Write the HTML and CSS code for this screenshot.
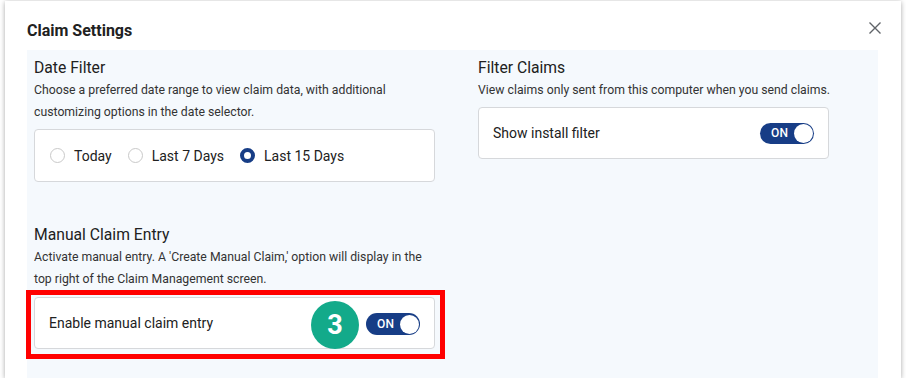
FILE: index.html
```html
<!DOCTYPE html>
<html lang="en">
<head>
  <meta charset="UTF-8" />
  <title>Claim Settings</title>
  <link rel="stylesheet" href="styles.css">
</head>
<body>
  <div class="modal">
    <div class="modal-header">
      <h1 class="modal-title">Claim Settings</h1>
      <button type="button" class="close-btn" aria-label="Close">
        <svg width="12" height="12" viewBox="0 0 12 12">
          <path d="M0.5 0.5 L11.5 11.5 M11.5 0.5 L0.5 11.5" stroke="#5f6368" stroke-width="1.4" fill="none" />
        </svg>
      </button>
    </div>

    <div class="settings-panel">
      <div class="settings-col">
        <div class="section">
          <h2 class="section-title">Date Filter</h2>
          <p class="section-desc">Choose a preferred date range to view claim data, with additional customizing options in the date selector.</p>
          <div class="option-box radio-row">
            <label class="radio"><span class="radio-dot"></span>Today</label>
            <label class="radio"><span class="radio-dot"></span>Last 7 Days</label>
            <label class="radio"><span class="radio-dot checked"></span>Last 15 Days</label>
          </div>
        </div>

        <div class="section section-manual">
          <h2 class="section-title">Manual Claim Entry</h2>
          <p class="section-desc">Activate manual entry. A 'Create Manual Claim,' option will display in the top right of the Claim Management screen.</p>
          <div class="option-box toggle-row highlight">
            <span class="toggle-label">Enable manual claim entry</span>
            <span class="toggle"><span class="toggle-text">ON</span><span class="toggle-knob"></span></span>
            <span class="step-badge">3</span>
            <span class="highlight-frame"></span>
          </div>
        </div>
      </div>

      <div class="settings-col">
        <div class="section">
          <h2 class="section-title">Filter Claims</h2>
          <p class="section-desc">View claims only sent from this computer when you send claims.</p>
          <div class="option-box toggle-row install-box">
            <span class="toggle-label">Show install filter</span>
            <span class="toggle"><span class="toggle-text">ON</span><span class="toggle-knob"></span></span>
          </div>
        </div>
      </div>
    </div>
  </div>
</body>
</html>
```

FILE: styles.css
```css
body {
  font-family: Roboto, 'Liberation Sans', sans-serif;
  background: #ffffff;
  margin: 0;
  padding: 1px 0 0 5px;
  color: #212121;
}

.modal {
  width: 896px;
  height: 377px;
  background: white;
  box-shadow: 0 1px 5px rgba(0,0,0,0.35);
  padding: 0 23px 0 22px;
  box-sizing: border-box;
  display: flex;
  flex-direction: column;
}

.modal-header {
  height: 49px;
  padding-top: 20px;
  box-sizing: border-box;
  display: flex;
  justify-content: space-between;
  align-items: flex-start;
}

.modal-title {
  margin: 0;
  font-size: 16px;
  line-height: 20px;
  font-weight: 700;
  color: #212121;
}

.close-btn {
  background: none;
  border: none;
  padding: 0;
  margin: 1px -3px 0 0;
  width: 12px;
  height: 12px;
  cursor: pointer;
  display: flex;
}

.settings-panel {
  flex: 1;
  background: #f5f9fd;
  padding: 7px;
  display: grid;
  grid-template-columns: 401px 1fr;
  column-gap: 43px;
  align-items: start;
}

.settings-col {
  display: flex;
  flex-direction: column;
}

.section-manual {
  margin-top: 42px;
}

.section-manual .section-desc {
  margin-bottom: 7px;
}

.section-title {
  margin: 0;
  font-size: 15.7px;
  line-height: 22px;
  font-weight: 400;
  color: #212121;
}

.section-desc {
  margin: 0 0 6px;
  font-size: 12.25px;
  line-height: 22px;
  color: #333333;
}

.option-box {
  background: white;
  border: 1px solid #d6d8db;
  border-radius: 4px;
  box-sizing: border-box;
  height: 53px;
  display: flex;
  align-items: center;
  position: relative;
}

.install-box {
  width: 351px;
}

.radio-row {
  padding: 0 15px;
  gap: 16px;
}

.radio {
  display: flex;
  align-items: center;
  gap: 9px;
  font-size: 14px;
  color: #212121;
}

.radio-dot {
  width: 15px;
  height: 15px;
  border: 1px solid #c9c9c9;
  border-radius: 50%;
  box-sizing: border-box;
  background: white;
}

.radio-dot.checked {
  border: 4px solid #173d86;
}

.toggle-row {
  height: 52px;
  padding: 0 14px 0 14px;
  justify-content: space-between;
}

.toggle-label {
  font-size: 14px;
  color: #212121;
}

.toggle {
  width: 54px;
  height: 21px;
  border-radius: 11px;
  background: #173d86;
  display: flex;
  align-items: center;
  justify-content: space-between;
  padding: 0 1px 0 11px;
  box-sizing: border-box;
}

.toggle-text {
  color: white;
  font-size: 12px;
  font-weight: 500;
  letter-spacing: 0.2px;
}

.toggle-knob {
  width: 19px;
  height: 19px;
  border-radius: 50%;
  background: white;
}

.highlight .toggle {
  height: 22px;
  margin-top: 2px;
}

.step-badge {
  position: absolute;
  left: 276px;
  top: 3px;
  width: 48px;
  height: 48px;
  border-radius: 50%;
  background: #13aa8a;
  color: white;
  font-size: 27px;
  font-weight: 700;
  display: flex;
  align-items: center;
  justify-content: center;
}

.highlight-frame {
  position: absolute;
  left: -9px;
  right: -11px;
  top: -8px;
  bottom: -11px;
  border: 5px solid #ff0000;
  pointer-events: none;
}
```
